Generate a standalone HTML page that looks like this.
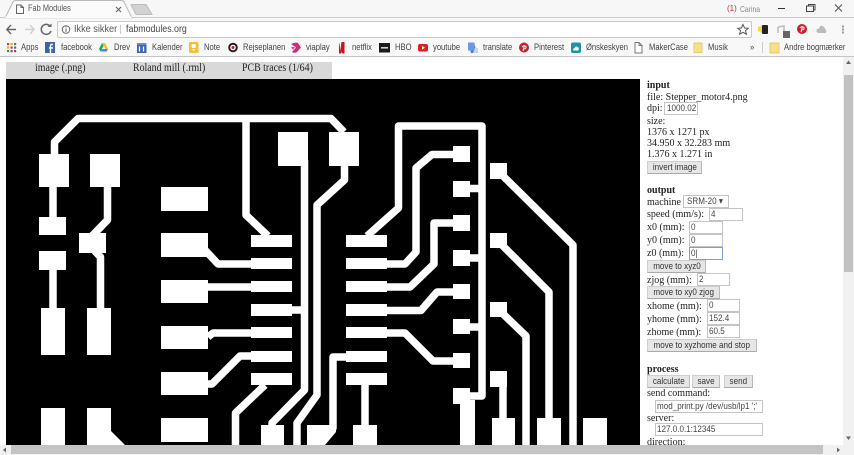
<!DOCTYPE html>
<html><head><meta charset="utf-8">
<style>
html,body{margin:0;padding:0;width:854px;height:455px;overflow:hidden;background:#fff;}
#r{position:relative;width:854px;height:455px;overflow:hidden;font-family:"Liberation Sans",sans-serif;filter:blur(.3px);}
.a{position:absolute;white-space:pre;}
.bm{position:absolute;top:42px;font:9.2px/11px "Liberation Sans",sans-serif;color:#444;white-space:pre;transform:scaleX(.83);transform-origin:0 0;}
.t{position:absolute;left:647px;font:11px/12px "Liberation Serif",serif;color:#222;white-space:pre;transform:scaleX(.91);transform-origin:0 0;}
.tab{position:absolute;top:62px;font:11.5px/13px "Liberation Serif",serif;color:#222;white-space:pre;transform:scaleX(.86);transform-origin:0 0;}
.in{position:absolute;box-sizing:border-box;height:13px;border:1px solid #c4c4c4;background:#fff;font:9.5px/11px "Liberation Sans",sans-serif;color:#444;padding-left:1px;white-space:pre;overflow:hidden;}
.in span{display:inline-block;transform:scaleX(.85);transform-origin:0 0;}
.b{position:absolute;box-sizing:border-box;height:13px;background:#e6e6e6;border:1px solid #cfcfcf;border-bottom-color:#aaa;border-right-color:#bbb;font:9.5px/11px "Liberation Sans",sans-serif;color:#333;white-space:pre;display:flex;justify-content:center;}
.b span{display:block;transform:scaleX(.85);}
</style></head><body><div id="r">
<!-- chrome -->
<div class="a" style="left:0;top:0;width:854px;height:18px;background:#f7f7f7"></div>
<div class="a" style="left:0;top:17px;width:854px;height:1px;background:#c9c9c9"></div>
<div class="a" style="left:0;top:18px;width:854px;height:20px;background:#f8f8f8"></div>
<div class="a" style="left:0;top:38px;width:854px;height:18px;background:#f8f8f8"></div>
<div class="a" style="left:0;top:56px;width:854px;height:1px;background:#c4c4c4"></div>
<svg class="a" style="left:0;top:0" width="854" height="57" viewBox="0 0 854 57">
<path d="M5 18 L13 2 Q14 0.5 16 0.5 L121 0.5 Q123 0.5 124 2 L132 18Z" fill="#fbfbfb" stroke="#b9b9b9" stroke-width="1"/>
<path d="M5 17.5H132" stroke="#fbfbfb" stroke-width="1.5"/>
<path d="M131 5 Q131.500 4.500 133 4.500 L146 4.500 L152 14.500 L136 14.500Z" fill="#d2d2d2" stroke="#bcbcbc"/>
<path d="M16.500 5 H21 L23.500 7.500 V13.500 H16.500Z M21 5 V7.500 H23.500" fill="none" stroke="#666" stroke-width="1"/>
<path d="M116 7 L121 12 M121 7 L116 12" stroke="#666" stroke-width="1.200"/>
<path d="M16 29.500 H7 M11 25 L6.800 29.500 L11 34" fill="none" stroke="#666" stroke-width="1.400"/>
<path d="M25 29.500 H34 M30 25 L34.200 29.500 L30 34" fill="none" stroke="#d0d0d0" stroke-width="1.400"/>
<path d="M50 26 A5 5 0 1 0 51 31" fill="none" stroke="#666" stroke-width="1.500"/><path d="M47.500 27 H51.500 V23.500Z" fill="#666"/>
<rect x="57.500" y="21.500" width="694" height="16" rx="1.500" fill="#fff" stroke="#c9c9c9"/>
<circle cx="66" cy="29.500" r="3.800" fill="none" stroke="#666" stroke-width="1"/><path d="M66 28.500V32M66 26.500V27.500" stroke="#666"/>
<path d="M120.500 25V34" stroke="#ccc"/>
<path d="M743 24.500 L744.600 28 L748.200 28.300 L745.500 30.600 L746.400 34.200 L743 32.300 L739.600 34.200 L740.500 30.600 L737.800 28.300 L741.400 28Z" fill="none" stroke="#555"/>
<path d="M758 27 L762 25.500 V33 L758 31Z" fill="#f0dc3a"/><rect x="762" y="25" width="6" height="9" rx="1" fill="#222"/>
<path d="M778 27 L784 26 V32 M778 27 V33" fill="none" stroke="#bbb" stroke-width="1.500"/><rect x="783" y="31" width="7" height="7" fill="#666"/>
<circle cx="802" cy="29" r="5" fill="#c8232c"/><path d="M801 32 L802.500 26.500 M800 28 Q802 25.500 804 27.500 Q804.500 30 802 30" fill="none" stroke="#fff" stroke-width="1"/>
<path d="M819 33 Q816 33 816.500 30 Q817 28.500 819 28.500 Q820 25 822.500 26 Q825 27 825 29 Q827 30 826 33Z" fill="#bcbcbc"/>
<path d="M843 25.500v2M843 28.500v2M843 31.500v2" stroke="#777" stroke-width="1.400"/>
<path d="M778 8.500 H785" stroke="#333" stroke-width="1"/>
<path d="M806.500 6 H813.500 V11.500 H806.500Z M808.500 6 V4.500 H815 V10 H813.500" fill="none" stroke="#444"/>
<path d="M835 4.500 L842 11.500 M842 4.500 L835 11.500" stroke="#555" stroke-width="1"/>
<!-- bookmark icons -->
<g fill="#c8402a"><rect x="7" y="43" width="2.200" height="2.200"/><rect x="10.500" y="43" width="2.200" height="2.200" fill="#e8a82a"/><rect x="14" y="43" width="2.200" height="2.200" fill="#4b8a3c"/><rect x="7" y="46.500" width="2.200" height="2.200" fill="#e8a82a"/><rect x="10.500" y="46.500" width="2.200" height="2.200"/><rect x="14" y="46.500" width="2.200" height="2.200" fill="#3c6cc8"/><rect x="7" y="50" width="2.200" height="2.200" fill="#4b8a3c"/><rect x="10.500" y="50" width="2.200" height="2.200" fill="#3c6cc8"/><rect x="14" y="50" width="2.200" height="2.200"/></g>
<rect x="45" y="42" width="10" height="11" fill="#3b66a8"/><path d="M53 44.500H51.500Q50.500 44.500 50.500 46V53M49 48H53" fill="none" stroke="#fff" stroke-width="1.400"/>
<path d="M102 43 H105 L108 49 H105.500Z" fill="#f4c20d"/><path d="M102 43 L99 49 L100.500 51.500 L103.500 46Z" fill="#1ea362"/><path d="M100.500 51.500 H106.500 L108 49 H102Z" fill="#4285f4"/>
<rect x="137" y="43" width="9.500" height="10" fill="#3d64b0"/><rect x="137" y="43" width="9.500" height="2" fill="#6a8cd0"/><path d="M139.500 46.500V51.500M143.500 46.500V51.500" stroke="#fff" stroke-width="1.300"/>
<rect x="189" y="42" width="9.500" height="11" rx="1" fill="#f2c13c"/><rect x="191.500" y="44" width="4.500" height="4" rx="2" fill="#fff"/><rect x="192.500" y="49" width="2.500" height="1.500" fill="#fff"/>
<circle cx="233" cy="47.500" r="4.800" fill="#222"/><circle cx="233" cy="47.500" r="2.800" fill="#fff"/><circle cx="233" cy="47.500" r="1.500" fill="#c8202c"/>
<path d="M291 44 Q295 42 298 43 L301 47.500 L297 52 Q294 53.500 292 52 L296 47.500Z" fill="#cf2c7c"/><path d="M291 47 H295 L293 50Z" fill="#e84a6a"/>
<path d="M339 42 H341.500 L344 53 H341.500Z M339 42 V53.500 H341 V42 M342 42 H344.500 V53.500 H342.500" fill="#c8141e"/>
<rect x="379" y="43" width="11" height="9.500" fill="#1a1a1a"/><path d="M381 47.800H388" stroke="#ddd" stroke-width="1.500"/>
<rect x="418" y="44" width="10" height="7.500" rx="2" fill="#e01e1e"/><path d="M422 46V49.500L425 47.750Z" fill="#fff"/>
<path d="M468 42.500 H474 L477 53 H471Z" fill="#4a7ce0"/><rect x="468" y="42.500" width="6.500" height="8" fill="#6f96e8"/><path d="M475 48H478V53H473Z" fill="#c9d4ec"/>
<circle cx="524" cy="47.500" r="5" fill="#c8232c"/><path d="M523 51 L524.500 45.500 M522 47 Q524 44.500 526 46.500 Q526.500 49 524 49" fill="none" stroke="#fff" stroke-width="1"/>
<rect x="571" y="42.500" width="10" height="10.500" rx="2" fill="#1d93a8"/><path d="M573.500 50.500 Q572.500 48.500 574.500 48 Q575.500 45.500 577.500 47 Q579.500 47.500 578.500 50.500Z" fill="#fff"/>
<path d="M635 42.500H639L642 45.500V53H635Z M639 42.500V45.500H642" fill="#fff" stroke="#777"/>
<path d="M694 43H702V52.500H694Z" fill="#f7e08c" stroke="#e9cc6a"/>
<path d="M770 43H779V53H770Z" fill="#f7e08c" stroke="#e9cc6a"/>
<path d="M762.500 42V53" stroke="#ccc"/>
<rect x="6" y="57" width="11" height="2.500" fill="#33339a"/>
<rect x="20" y="57" width="49" height="1.500" fill="#b5a6d3"/>
</svg>
<div class="a" style="left:28px;top:3px;font:9.500px/12px 'Liberation Sans',sans-serif;color:#555;transform:scaleX(.78);transform-origin:0 0">Fab Modules</div>
<div class="a" style="left:74px;top:23px;font:10.500px/13px 'Liberation Sans',sans-serif;color:#555;transform:scaleX(.87);transform-origin:0 0">Ikke sikker</div>
<div class="a" style="left:126px;top:23px;font:10.500px/13px 'Liberation Sans',sans-serif;color:#444;transform:scaleX(.84);transform-origin:0 0">fabmodules.org</div>
<div class="a" style="left:727px;top:3px;font:8px/12px 'Liberation Sans',sans-serif;color:#b33">(1)</div>
<div class="a" style="left:740px;top:3px;font:8.500px/12px 'Liberation Sans',sans-serif;color:#888;transform:scaleX(.8);transform-origin:0 0">Carina</div>
<span class="bm" style="left:21px">Apps</span><span class="bm" style="left:61px">facebook</span><span class="bm" style="left:114px">Drev</span><span class="bm" style="left:152px">Kalender</span><span class="bm" style="left:204px">Note</span><span class="bm" style="left:243px">Rejseplanen</span><span class="bm" style="left:306px">viaplay</span><span class="bm" style="left:352px">netflix</span><span class="bm" style="left:395px">HBO</span><span class="bm" style="left:433px">youtube</span><span class="bm" style="left:483px">translate</span><span class="bm" style="left:534px">Pinterest</span><span class="bm" style="left:586px">Ønskeskyen</span><span class="bm" style="left:649px">MakerCase</span><span class="bm" style="left:708px">Musik</span><span class="bm" style="left:750px">»</span><span class="bm" style="left:784px">Andre bogmærker</span>

<!-- tabs bar -->
<div class="a" style="left:6px;top:62px;width:326px;height:17px;background:#d9d9d9"></div>
<div class="tab" style="left:35px">image (.png)</div>
<div class="tab" style="left:133px">Roland mill (.rml)</div>
<div class="tab" style="left:242px">PCB traces (1/64)</div>

<!-- board -->
<svg class="a" style="left:0;top:0" width="854" height="455" viewBox="0 0 854 455">
<rect x="6" y="79" width="634" height="366" fill="#000"/>
<g fill="none" stroke="#fff" stroke-width="7.500" stroke-linejoin="round">
<path d="M54.500 156V142L78 118.500H331L344 132"/>
<path d="M53 187V218M53 270V309"/>
<path d="M107.500 187V220L90 238M93 249L100.500 257V309"/>
<path d="M246 118V215L268 236"/>
<path d="M205 250L218 264H252"/>
<path d="M208 287H252M208 337L213 333H252M208 384H212L240 356H252"/>
<path d="M292 310H304.500"/>
<path d="M304.500 160V390L272 423V430"/>
<path d="M344.500 166V180L317 205V395L297 423V445"/>
<path d="M265 385L235.500 413V445"/>
<path d="M346 357H333V428L326 436"/>
<path d="M365 385V426"/>
<path d="M367 236L398.500 208V126H482V396H468"/>
<path d="M387 264H405L416 252V168L432 154.500H454"/>
<path d="M387 287H410L434 264V223H454"/>
<path d="M387 310.500H421L437 292H454"/>
<path d="M387 333H405L433 361H454"/>
<path d="M470 188.500H482M470 258H482M470 327H482"/>
<path d="M500 173L573 245V445"/>
<path d="M497 240L549 292V420"/>
<path d="M500 311L526 336V445"/>
<path d="M503 380V420"/>
</g>
<g fill="#fff">
<rect x="39" y="154" width="30" height="33"/><rect x="90" y="154" width="30" height="33"/>
<rect x="39" y="217" width="27" height="18"/><rect x="79" y="233" width="27" height="20"/>
<rect x="39" y="251" width="27" height="19"/>
<rect x="41" y="308" width="24" height="47"/><rect x="87" y="308" width="24" height="47"/>
<rect x="41" y="408" width="24" height="37"/><path d="M87 408H111V431L125 445H87Z"/>
<rect x="161" y="187" width="47" height="24"/><rect x="161" y="233" width="47" height="24"/><rect x="161" y="280" width="47" height="23"/><rect x="161" y="326" width="47" height="23"/><rect x="161" y="372" width="47" height="23"/><rect x="161" y="418" width="47" height="24"/>
<rect x="251" y="235" width="41" height="12"/><rect x="251" y="258" width="41" height="11"/><rect x="251" y="281" width="41" height="11"/><rect x="251" y="304" width="41" height="12"/><rect x="251" y="327" width="41" height="11"/><rect x="251" y="351" width="41" height="11"/><rect x="251" y="373" width="41" height="12"/>
<rect x="346" y="235" width="41" height="12"/><rect x="346" y="258" width="41" height="11"/><rect x="346" y="281" width="41" height="11"/><rect x="346" y="304" width="41" height="12"/><rect x="346" y="327" width="41" height="11"/><rect x="346" y="351" width="41" height="11"/><rect x="346" y="373" width="41" height="12"/>
<rect x="278" y="132" width="30" height="34"/><rect x="329" y="132" width="30" height="34"/>
<rect x="261" y="425" width="23" height="20"/><path d="M307 425H336V432L325 445H307Z"/><rect x="353" y="425" width="24" height="20"/>
<rect x="453" y="146" width="17" height="16"/><rect x="453" y="181" width="17" height="16"/><rect x="453" y="215" width="17" height="16"/><rect x="453" y="250" width="17" height="16"/><rect x="453" y="284" width="17" height="15"/><rect x="453" y="319" width="17" height="15"/><rect x="453" y="353" width="17" height="15"/><rect x="453" y="388" width="17" height="16"/>
<rect x="460" y="400" width="15" height="45"/>
<rect x="490" y="163" width="17" height="16"/><rect x="490" y="233" width="17" height="15"/><rect x="490" y="302" width="17" height="15"/><rect x="490" y="371" width="17" height="16"/>
<rect x="492" y="418" width="23" height="27"/><rect x="537" y="418" width="24" height="27"/><rect x="583" y="418" width="24" height="27"/>
</g>
</svg>

<!-- right panel -->
<div class="t" style="top:79px"><b>input</b></div>
<div class="t" style="top:91px">file: Stepper_motor4.png</div>
<div class="t" style="top:102px">dpi:</div><div class="in" style="left:664px;top:102px;width:34px;padding-left:2px"><span>1000.02</span></div>
<div class="t" style="top:115px">size:</div>
<div class="t" style="top:126px">1376 x 1271 px</div>
<div class="t" style="top:137px">34.950 x 32.283 mm</div>
<div class="t" style="top:148px">1.376 x 1.271 in</div>
<div class="b" style="left:647px;top:161px;width:55px"><span>invert image</span></div>
<div class="t" style="top:184px"><b>output</b></div>
<div class="t" style="top:196px">machine</div><div class="in" style="left:683px;top:195px;width:46px;padding-left:3px"><span>SRM-20 ▾</span></div>
<div class="t" style="top:208px">speed (mm/s):</div><div class="in" style="left:709px;top:208px;width:34px"><span>4</span></div>
<div class="t" style="top:221px">x0 (mm):</div><div class="in" style="left:689px;top:221px;width:34px"><span>0</span></div>
<div class="t" style="top:234px">y0 (mm):</div><div class="in" style="left:689px;top:234px;width:34px"><span>0</span></div>
<div class="t" style="top:247px">z0 (mm):</div><div class="in" style="left:689px;top:247px;width:34px;border-color:#7b9fd6"><span>0|</span></div>
<div class="b" style="left:647px;top:260px;width:59px"><span>move to xyz0</span></div>
<div class="t" style="top:274px">zjog (mm):</div><div class="in" style="left:697px;top:273px;width:33px"><span>2</span></div>
<div class="b" style="left:647px;top:286px;width:73px"><span>move to xy0 zjog</span></div>
<div class="t" style="top:300px">xhome (mm):</div><div class="in" style="left:707px;top:299px;width:33px"><span>0</span></div>
<div class="t" style="top:313px">yhome (mm):</div><div class="in" style="left:707px;top:312px;width:33px"><span>152.4</span></div>
<div class="t" style="top:326px">zhome (mm):</div><div class="in" style="left:707px;top:325px;width:33px"><span>60.5</span></div>
<div class="b" style="left:647px;top:339px;width:110px"><span>move to xyzhome and stop</span></div>
<div class="t" style="top:363px"><b>process</b></div>
<div class="b" style="left:647px;top:375px;width:43px"><span>calculate</span></div>
<div class="b" style="left:692px;top:375px;width:28px"><span>save</span></div>
<div class="b" style="left:724px;top:375px;width:29px"><span>send</span></div>
<div class="t" style="top:387px">send command:</div>
<div class="in" style="left:655px;top:400px;width:108px"><span>mod_print.py /dev/usb/lp1 ';'</span></div>
<div class="t" style="top:412px">server:</div>
<div class="in" style="left:655px;top:423px;width:108px"><span>127.0.0.1:12345</span></div>
<div class="t" style="top:436px">direction:</div>

<!-- scrollbars -->
<div class="a" style="left:843px;top:57px;width:11px;height:388px;background:#f1f1f1"></div>
<div class="a" style="left:844px;top:75px;width:9px;height:197px;background:#c1c1c1"></div>
<div class="a" style="left:0;top:445px;width:854px;height:10px;background:#f1f1f1"></div>
<div class="a" style="left:11px;top:445px;width:812px;height:9px;background:#c4c4c4"></div>
<svg class="a" style="left:0;top:0" width="854" height="455" viewBox="0 0 854 455">
<path d="M848.500 60.500L846 64H851Z M848.500 440L846 436.500H851Z M3 450L6 447.500V452.500Z M840 450L837 447.500V452.500Z" fill="#666"/>
</svg>
</div></body></html>
